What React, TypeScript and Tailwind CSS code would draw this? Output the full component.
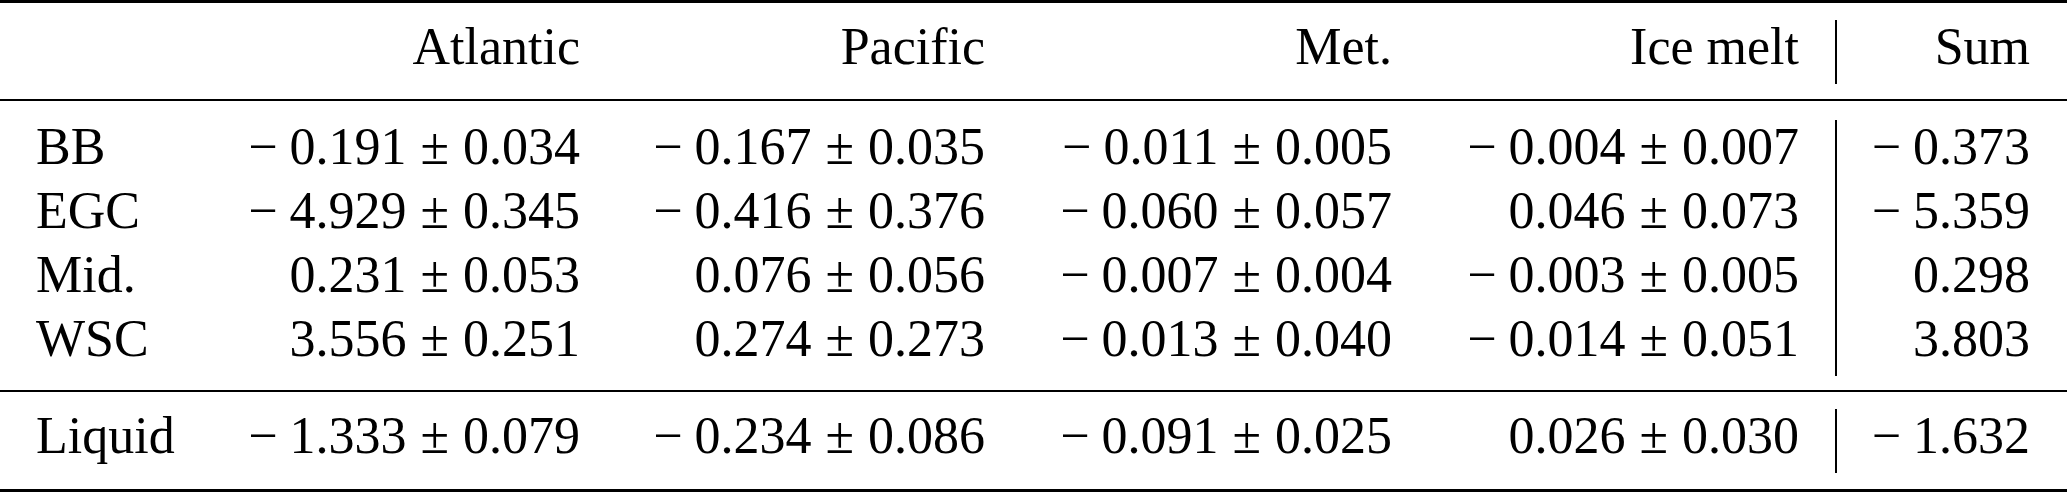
import React from "react";

type Row = { label: string; cells: [string, string][]; sum: string };

const COLS = ["Atlantic", "Pacific", "Met.", "Ice melt"];

const BODY: Row[] = [
  { label: "BB", cells: [["-0.191", "0.034"], ["-0.167", "0.035"], ["-0.011", "0.005"], ["-0.004", "0.007"]], sum: "-0.373" },
  { label: "EGC", cells: [["-4.929", "0.345"], ["-0.416", "0.376"], ["-0.060", "0.057"], ["0.046", "0.073"]], sum: "-5.359" },
  { label: "Mid.", cells: [["0.231", "0.053"], ["0.076", "0.056"], ["-0.007", "0.004"], ["-0.003", "0.005"]], sum: "0.298" },
  { label: "WSC", cells: [["3.556", "0.251"], ["0.274", "0.273"], ["-0.013", "0.040"], ["-0.014", "0.051"]], sum: "3.803" },
];

const TOTAL: Row = {
  label: "Liquid",
  cells: [["-1.333", "0.079"], ["-0.234", "0.086"], ["-0.091", "0.025"], ["0.026", "0.030"]],
  sum: "-1.632",
};

// minus sign gets a bit of room like in math mode
function Val({ v }: { v: string }) {
  if (v.startsWith("-")) {
    return (
      <span>
        <span className="mr-[12px]">{"\u2212"}</span>
        {v.slice(1)}
      </span>
    );
  }
  return <span>{v}</span>;
}

function Line({ row }: { row: Row }) {
  return (
    <div className="grid grid-cols-[200px_416px_405px_407px_407px_232px] h-[64px] leading-[53px] [font-family:'Liberation_Serif',serif]">
      <div className="pl-[36px]">{row.label}</div>
      {row.cells.map(([a, b], i) => (
        <div key={i} className="text-right pr-[36px] whitespace-nowrap">
          <Val v={a} />
          <span className="mx-[14px]">±</span>
          <Val v={b} />
        </div>
      ))}
      <div className="text-right pr-[37px] border-l-2 border-black whitespace-nowrap">
        <Val v={row.sum} />
      </div>
    </div>
  );
}

export default function App() {
  return (
    <div
      className="w-[2067px] h-[492px] bg-white text-black text-[52px]"
      style={{ fontFamily: "'Liberation Serif', 'Times New Roman', serif" }}
    >
      <div className="h-[3px] bg-black" />

      {/* header */}
      <div className="pt-[17px] pb-[15px]">
        <div className="grid grid-cols-[200px_416px_405px_407px_407px_232px] h-[64px] leading-[53px] [font-family:'Liberation_Serif',serif]">
          <div />
          {COLS.map((c) => (
            <div key={c} className="text-right pr-[36px]">
              {c}
            </div>
          ))}
          <div className="text-right pr-[37px] border-l-2 border-black">Sum</div>
        </div>
      </div>

      <div className="h-[2px] bg-black" />

      <div className="pt-[19px] pb-[14px]">
        {BODY.map((r) => (
          <Line key={r.label} row={r} />
        ))}
      </div>

      <div className="h-[2px] bg-black" />

      <div className="pt-[17px] pb-[16px]">
        <Line row={TOTAL} />
      </div>

      <div className="h-[3px] bg-black" />
    </div>
  );
}
